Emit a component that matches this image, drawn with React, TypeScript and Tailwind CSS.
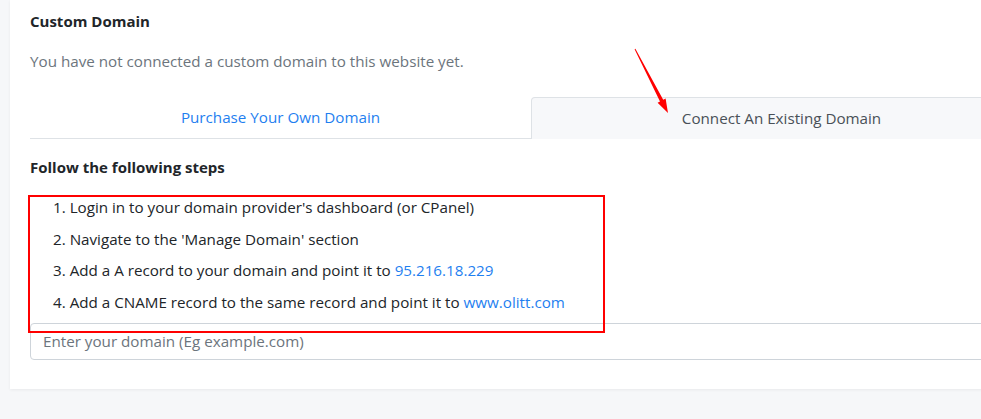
import React from "react";

const steps = [
    { text: "Login in to your domain provider's dashboard (or CPanel)" },
    { text: "Navigate to the 'Manage Domain' section" },
    { text: "Add a A record to your domain and point it to", link: "95.216.18.229" },
    { text: "Add a CNAME record to the same record and point it to", link: "www.olitt.com" },
];

function App() {
    return (
        <div
            className="relative w-[981px] h-[419px] overflow-hidden bg-[#f6f7f9] pl-[10px] text-[#212529]"
            style={{ fontFamily: "'Open Sans', 'Noto Sans', Arial, sans-serif" }}
        >
            {/* Card */}
            <div className="w-[1042px] h-[389px] bg-white shadow-[0_1px_3px_rgba(0,0,0,0.06)] px-5 pt-[11px]">
                <h3 className="text-[15px] leading-[20px] font-bold">Custom Domain</h3>
                <p className="mt-[19px] text-[15.2px] leading-[22px] text-[#6c757d]">
                    You have not connected a custom domain to this website yet.
                </p>

                {/* Tabs */}
                <div className="mt-[25px] flex border-b border-[#dee2e6]">
                    <div className="w-[501px] h-[41px] flex items-center justify-center text-[15.2px] text-[#1f7ff0]">
                        Purchase Your Own Domain
                    </div>
                    <div className="w-[501px] h-[42px] -mb-px flex items-center justify-center text-[15.2px] text-[#495057] bg-[#f7f8fa] border border-b-0 border-[#dee2e6] rounded-t">
                        Connect An Existing Domain
                    </div>
                </div>

                <h4 className="mt-[18px] text-[15px] leading-[20px] font-bold">Follow the following steps</h4>

                <ol className="mt-[15px] pl-[23px] text-[15.2px]">
                    {steps.map((step, i) => (
                        <li key={i} className="leading-[31.67px]">
                            {i + 1}. {step.text}
                            {step.link && (
                                <>
                                    {" "}
                                    <span className="text-[#1f7ff0]">{step.link}</span>
                                </>
                            )}
                        </li>
                    ))}
                </ol>

                <input
                    type="text"
                    placeholder="Enter your domain (Eg example.com)"
                    className="mt-[4px] block w-full h-[37px] px-3 text-[15.2px] border border-[#ced4da] rounded placeholder:text-[#6c757d] outline-none"
                />
            </div>

            {/* annotation box */}
            <div className="absolute left-[28px] top-[195px] w-[577px] h-[138px] border-2 border-[#ff0000] pointer-events-none" />

            {/* annotation arrow */}
            <svg className="absolute left-0 top-0 pointer-events-none" width="981" height="419">
                <polygon
                    points="634.6,49.2 635.4,48.8 663.2,99.8 665.6,98.5 668,113 657.6,102.7 660,101.4"
                    fill="#ff0000"
                />
            </svg>
        </div>
    );
}

export default App;
